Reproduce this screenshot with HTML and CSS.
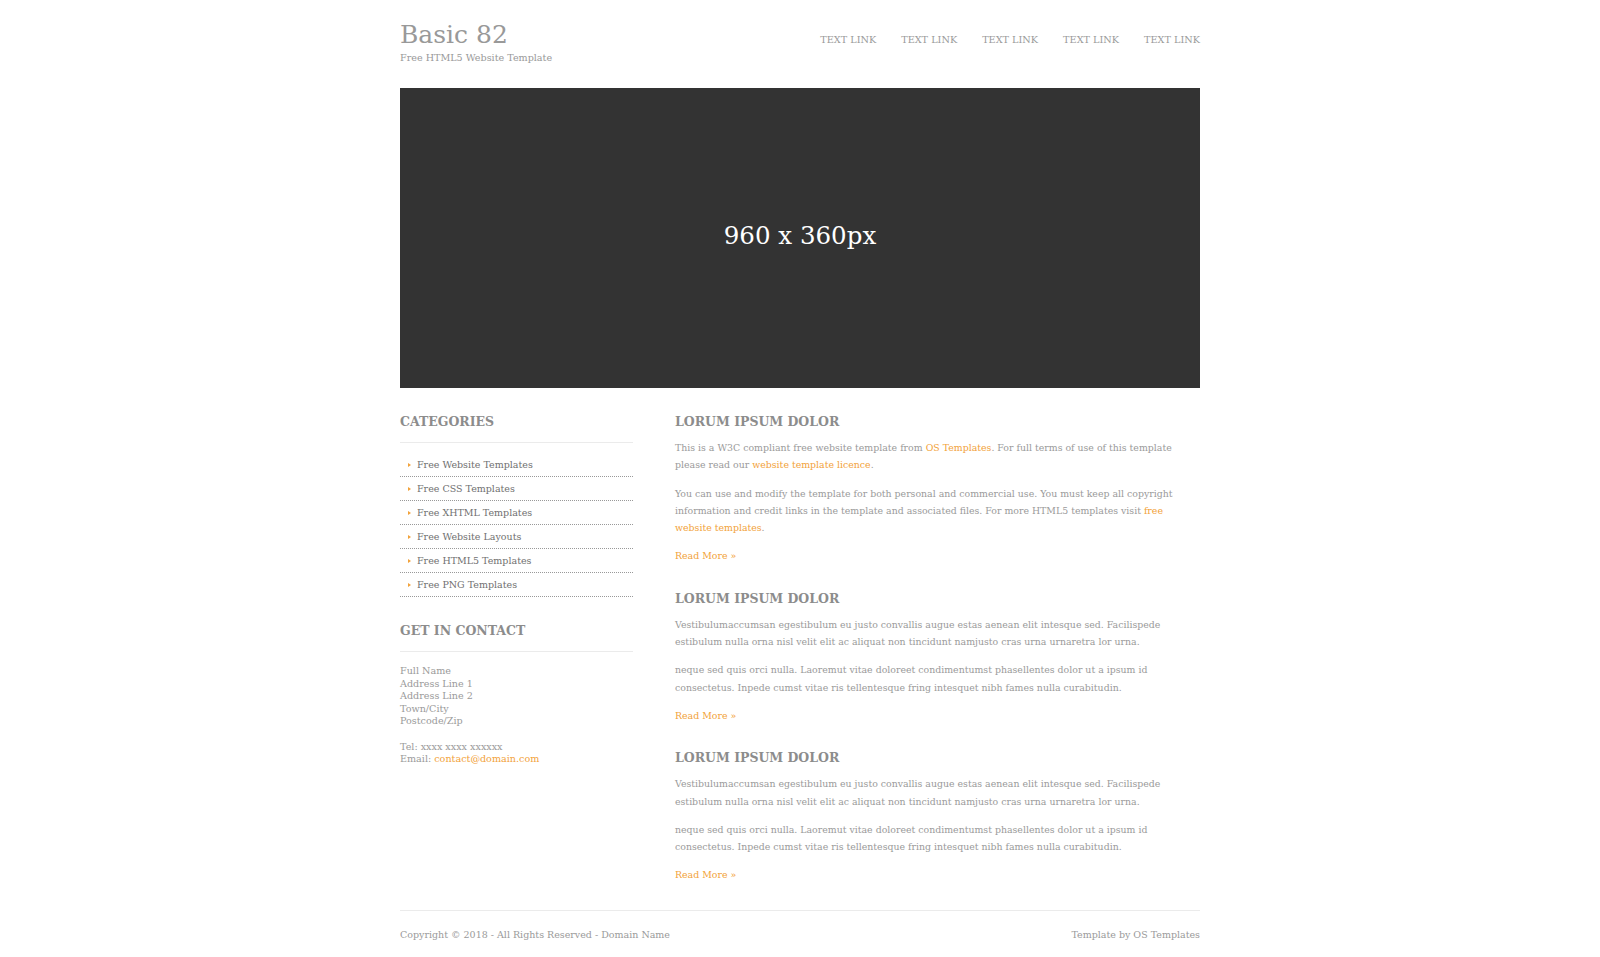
FILE: index.html
```html
<!DOCTYPE html>
<html lang="en">
<head>
<meta charset="utf-8">
<title>Basic 82</title>
<link rel="stylesheet" href="styles.css">
</head>
<body>
<div class="wrap">
  <header class="header">
    <div class="brand">
      <h1 class="brand-title">Basic 82</h1>
      <p class="brand-sub">Free HTML5 Website Template</p>
    </div>
    <nav class="nav">
      <a href="#">Text Link</a>
      <a href="#">Text Link</a>
      <a href="#">Text Link</a>
      <a href="#">Text Link</a>
      <a href="#">Text Link</a>
    </nav>
  </header>

  <div class="banner">960 x 360px</div>

  <div class="container">
    <aside class="sidebar">
      <h2 class="side-title">Categories</h2>
      <ul class="cats">
        <li><a href="#">Free Website Templates</a></li>
        <li><a href="#">Free CSS Templates</a></li>
        <li><a href="#">Free XHTML Templates</a></li>
        <li><a href="#">Free Website Layouts</a></li>
        <li><a href="#">Free HTML5 Templates</a></li>
        <li><a href="#">Free PNG Templates</a></li>
      </ul>
      <h2 class="side-title">Get In Contact</h2>
      <address class="contact">
        Full Name<br>Address Line 1<br>Address Line 2<br>Town/City<br>Postcode/Zip
      </address>
      <p class="contact">Tel: xxxx xxxx xxxxxx<br>Email: <a href="#">contact@domain.com</a></p>
    </aside>

    <main class="content">
      <section class="post">
        <h2 class="post-title">Lorum Ipsum Dolor</h2>
        <p>This is a W3C compliant free website template from <a href="#">OS Templates</a>. For full terms of use of this template please read our <a href="#">website template licence</a>.</p>
        <p>You can use and modify the template for both personal and commercial use. You must keep all copyright information and credit links in the template and associated files. For more HTML5 templates visit <a href="#">free website templates</a>.</p>
        <p><a href="#">Read More &raquo;</a></p>
      </section>
      <section class="post">
        <h2 class="post-title">Lorum Ipsum Dolor</h2>
        <p>Vestibulumaccumsan egestibulum eu justo convallis augue estas aenean elit intesque sed. Facilispede estibulum nulla orna nisl velit elit ac aliquat non tincidunt namjusto cras urna urnaretra lor urna.</p>
        <p>neque sed quis orci nulla. Laoremut vitae doloreet condimentumst phasellentes dolor ut a ipsum id consectetus. Inpede cumst vitae ris tellentesque fring intesquet nibh fames nulla curabitudin.</p>
        <p><a href="#">Read More &raquo;</a></p>
      </section>
      <section class="post">
        <h2 class="post-title">Lorum Ipsum Dolor</h2>
        <p>Vestibulumaccumsan egestibulum eu justo convallis augue estas aenean elit intesque sed. Facilispede estibulum nulla orna nisl velit elit ac aliquat non tincidunt namjusto cras urna urnaretra lor urna.</p>
        <p>neque sed quis orci nulla. Laoremut vitae doloreet condimentumst phasellentes dolor ut a ipsum id consectetus. Inpede cumst vitae ris tellentesque fring intesquet nibh fames nulla curabitudin.</p>
        <p><a href="#">Read More &raquo;</a></p>
      </section>
    </main>
  </div>

  <footer class="footer">
    <span>Copyright &copy; 2018 - All Rights Reserved - Domain Name</span>
    <span>Template by OS Templates</span>
  </footer>
</div>
</body>
</html>
```

FILE: styles.css
```css
* { box-sizing: border-box; }

body {
  margin: 0;
  background: #fff;
  font-family: "DejaVu Serif", Georgia, serif;
  font-size: 9.4px;
  color: #9a9a9a;
}

a { color: #f2a23a; text-decoration: none; }

.wrap {
  width: 800px;
  margin: 0 auto;
}

/* Header */
.header {
  height: 88px;
  display: flex;
  justify-content: space-between;
  align-items: flex-start;
}

.brand { padding-top: 20px; }

.brand-title {
  margin: 0;
  font-size: 25px;
  font-weight: normal;
  line-height: 30px;
  color: #999;
}

.brand-sub {
  margin: 2px 0 0;
  font-size: 9.6px;
  line-height: 12px;
  color: #999;
}

.nav {
  display: flex;
  gap: 25px;
  padding-top: 34px;
}

.nav a {
  font-size: 9.7px;
  line-height: 12px;
  color: #9a9a9a;
  text-transform: uppercase;
}

/* Banner */
.banner {
  height: 300px;
  background: #333;
  color: #fff;
  display: flex;
  align-items: center;
  justify-content: center;
  font-size: 24.5px;
  padding-bottom: 6px;
}

/* Columns */
.container {
  display: grid;
  grid-template-columns: 233px 1fr;
  column-gap: 42px;
  padding-top: 26px;
}

.side-title,
.post-title {
  margin: 0;
  font-size: 12.5px;
  line-height: 16px;
  font-weight: bold;
  color: #8c8c8c;
  text-transform: uppercase;
}

.side-title {
  padding-bottom: 12px;
  border-bottom: 1px solid #ebebeb;
}

.cats {
  list-style: none;
  margin: 10px 0 26px;
  padding: 0;
}

.cats li {
  height: 24px;
  line-height: 23px;
  border-bottom: 1px dotted #999;
  padding-left: 17px;
  position: relative;
}

.cats li::before {
  content: "";
  position: absolute;
  left: 8px;
  top: 10px;
  border-left: 3px solid #f2a23a;
  border-top: 2px solid transparent;
  border-bottom: 2px solid transparent;
}

.cats a {
  color: #707070;
  font-size: 9.5px;
}

.contact {
  margin: 13px 0 0;
  font-style: normal;
  line-height: 12.5px;
  font-size: 9.6px;
}

p.contact { margin-top: 13px; }

/* Content */
.post { margin-bottom: 26px; }
.post:last-child { margin-bottom: 0; }

.post-title { margin-bottom: 9px; }

.post p {
  margin: 0 0 11px;
  line-height: 17.3px;
}

.post p:last-child { margin-bottom: 0; }

/* Footer */
.footer {
  margin-top: 26px;
  border-top: 1px solid #ebebeb;
  display: flex;
  justify-content: space-between;
  padding-top: 18px;
  line-height: 12px;
  color: #9a9a9a;
  font-size: 9.5px;
}
```
